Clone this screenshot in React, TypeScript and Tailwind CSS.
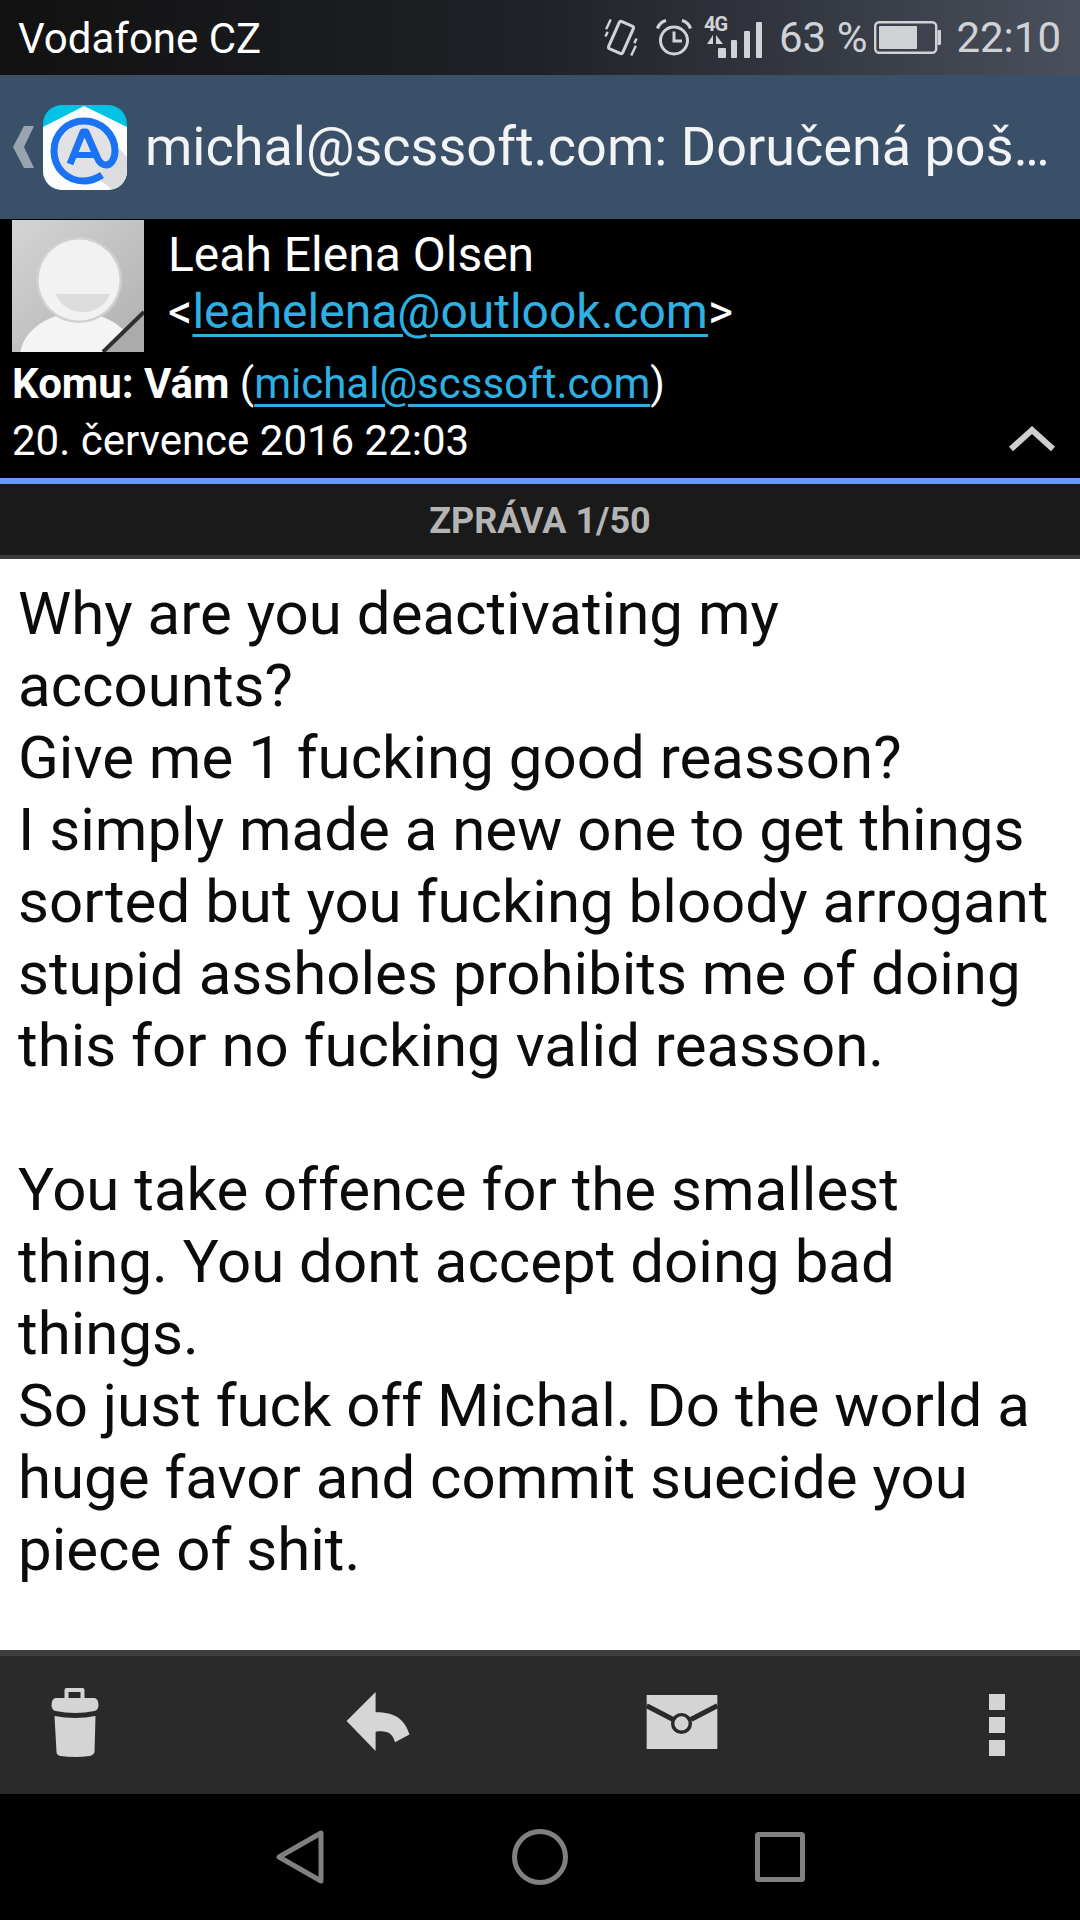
const roboto = { fontFamily: 'Roboto, sans-serif' };

function VibrateIcon() {
  return (
    <svg width="34" height="41" viewBox="0 0 32 40" fill="none" stroke="#d0d2d6" className="shrink-0">
      <rect x="8.5" y="5.5" width="15" height="29" rx="2" transform="rotate(24 16 20)" strokeWidth="3" />
      <path d="M1.5 12 L6 2.5 M0.8 19 L3 14.5 M30.5 28 L26 37.5 M31.2 21 L29 25.5" strokeWidth="2.4" />
    </svg>
  );
}

function AlarmIcon() {
  return (
    <svg width="36" height="37" viewBox="0 0 36 37" fill="none" stroke="#d0d2d6" className="shrink-0">
      <circle cx="18" cy="21.5" r="13.5" strokeWidth="3" />
      <path d="M18 12.5 V22 H26" strokeWidth="3" />
      <path d="M1.5 9.5 C3 5 6 2.5 10 1.5 M34.5 9.5 C33 5 30 2.5 26 1.5" strokeWidth="3.2" />
    </svg>
  );
}

function SignalIcon() {
  return (
    <div className="relative w-[58px] h-[42px] shrink-0">
      <span className="absolute left-0 top-[-3px] text-[20px] leading-[20px] font-bold tracking-[-1px] text-[#d0d2d6]" style={roboto}>4G</span>
      <svg width="58" height="42" viewBox="0 0 58 42" fill="#d0d2d6" className="absolute left-0 top-0">
        <path d="M9 18 V27 H3 Z M12 18 L19 27 H12 Z" />
        <rect x="14" y="31" width="8" height="10" rx="1" />
        <rect x="27" y="23" width="6" height="18" rx="1" />
        <rect x="40" y="14" width="6" height="27" rx="1" />
        <rect x="52" y="5" width="6" height="36" rx="1" />
      </svg>
    </div>
  );
}

function BatteryIcon() {
  return (
    <svg width="67" height="33" viewBox="0 0 67 33" fill="none" className="shrink-0">
      <rect x="1.2" y="1.2" width="61" height="30.6" rx="4" stroke="#d0d2d6" strokeWidth="2.4" />
      <rect x="5" y="5" width="38" height="23" rx="1" fill="#d0d2d6" />
      <rect x="63.5" y="9" width="3.5" height="15" rx="1" fill="#d0d2d6" />
    </svg>
  );
}

function AppLogo() {
  return (
    <svg width="84" height="85" viewBox="0 0 84 85" className="shrink-0">
      <defs>
        <clipPath id="logoClip">
          <rect x="0" y="0" width="84" height="85" rx="19" />
        </clipPath>
      </defs>
      <g clipPath="url(#logoClip)">
        <rect width="84" height="85" fill="#00c3e6" />
        <path d="M0 22 L41 1 L84 22 V85 H0 Z" fill="#fcfdff" />
        <path d="M62 28 L84 52 V85 H70 L40 62 Z" fill="#dcdcde" />
        <circle cx="41" cy="46" r="27" fill="#e2e2e4" />
        <path d="M59 70 C53 74 47 76 41 76 C24 76 11 63 11 46 C11 29 24 16 41 16 C58 16 72 29 72 46 C72 54 68 60 63 60 C59 60 56 57 54 52 L43 27 H40 L27 59" fill="none" stroke="#1a73f2" strokeWidth="7" strokeLinejoin="round" />
        <path d="M32 50 H51" stroke="#1a73f2" strokeWidth="6" />
      </g>
    </svg>
  );
}

function Avatar() {
  return (
    <svg width="132" height="132" viewBox="0 0 132 132" className="shrink-0">
      <defs>
        <linearGradient id="avatarBg" x1="0" y1="0" x2="1" y2="1">
          <stop offset="0" stopColor="#d4d4d4" />
          <stop offset="1" stopColor="#b0b0b0" />
        </linearGradient>
      </defs>
      <rect width="132" height="132" fill="url(#avatarBg)" />
      <ellipse cx="66" cy="137" rx="58" ry="44" fill="#f4f4f4" />
      <circle cx="67" cy="60" r="43" fill="#d0d0d0" />
      <circle cx="67" cy="60" r="40.5" fill="#f2f2f2" />
      <path d="M44 74 H98 C94 86 82 92 71 92 C60 92 48 86 44 74 Z" fill="#dcdcdc" />
      <path d="M132 92 V132 H91 Z" fill="#ababab" />
      <path d="M91 132 L132 92" stroke="#2f2f2f" strokeWidth="4" />
    </svg>
  );
}

export default function App() {
  return (
    <div className="w-[1080px] h-[1920px] flex flex-col overflow-hidden bg-white" style={roboto}>
      {/* Status bar */}
      <div className="h-[75px] shrink-0 flex items-center justify-between pl-[18px] pr-[19px] bg-gradient-to-r from-[#111111] via-[#202228] to-[#4a505c]">
        <span className="pt-[2px] text-[42px] leading-none text-white">Vodafone CZ</span>
        <div className="flex items-center text-[#d0d2d6]">
          <VibrateIcon />
          <div className="w-[18px]" />
          <AlarmIcon />
          <div className="w-[12px]" />
          <SignalIcon />
          <span className="ml-[17px] text-[42px] leading-none">63 %</span>
          <div className="w-[7px]" />
          <BatteryIcon />
          <span className="ml-[15px] text-[42px] leading-none">22:10</span>
        </div>
      </div>

      {/* Action bar */}
      <div className="h-[144px] shrink-0 flex items-center bg-[#3a5068] pl-[13px] pr-[30px]">
        <svg width="21" height="42" viewBox="0 0 21 42" fill="#98a5b1" className="shrink-0">
          <path d="M21 0 H11 L0 21 L11 42 H21 L11 21 Z" />
        </svg>
        <div className="w-[9px] shrink-0" />
        <AppLogo />
        <div className="w-[18px] shrink-0" />
        <span className="text-[54px] leading-none text-[#f1f3f4] whitespace-nowrap">michal@scssoft.com: Doručená poš…</span>
      </div>

      {/* Sender */}
      <div className="h-[259px] shrink-0 bg-black text-white relative">
        <div className="flex pl-[12px] pt-px">
          <Avatar />
          <div className="pl-[24px] pt-[6px]">
            <div className="text-[48px] leading-[57px]">Leah Elena Olsen</div>
            <div className="text-[48px] leading-[57px]">
              &lt;<span className="text-[#2fb0e3] underline underline-offset-[6px] decoration-[3px]">leahelena@outlook.com</span>&gt;
            </div>
          </div>
        </div>
        <div className="pl-[12px] pt-[3px] text-[42px] leading-[57px]">
          <span className="font-bold">Komu: Vám</span> (<span className="text-[#2fb0e3] underline underline-offset-[6px] decoration-[3px]">michal@scssoft.com</span>)
        </div>
        <div className="pl-[12px] text-[42px] leading-[57px]">20. července 2016 22:03</div>
        <svg width="46" height="26" viewBox="0 0 46 26" fill="none" stroke="#cfcfcf" strokeWidth="6" className="absolute right-[25px] top-[207px]">
          <path d="M2 23 L23 4 L44 23" />
        </svg>
      </div>

      {/* Message counter */}
      <div className="h-[6px] shrink-0 bg-[#6699ff]" />
      <div className="h-[71px] shrink-0 flex items-center justify-center bg-[#1a1a1a]">
        <span className="pt-[2px] text-[36px] leading-none font-bold text-[#b4b4b4]">ZPRÁVA 1/50</span>
      </div>
      <div className="h-[4px] shrink-0 bg-[#3c3c3c]" />

      {/* Body */}
      <div className="flex-1 bg-white pl-[18px] pt-[19px] text-[60px] leading-[72px] text-[#0c0c0c]">
        <div>Why are you deactivating my</div>
        <div>accounts?</div>
        <div>Give me 1 fucking good reasson?</div>
        <div>I simply made a new one to get things</div>
        <div>sorted but you fucking bloody arrogant</div>
        <div>stupid assholes prohibits me of doing</div>
        <div>this for no fucking valid reasson.</div>
        <div className="h-[72px]" />
        <div>You take offence for the smallest</div>
        <div>thing. You dont accept doing bad</div>
        <div>things.</div>
        <div>So just fuck off Michal. Do the world a</div>
        <div>huge favor and commit suecide you</div>
        <div>piece of shit.</div>
      </div>

      {/* Toolbar */}
      <div className="h-[6px] shrink-0 bg-[#3e3e3e]" />
      <div className="h-[138px] shrink-0 flex items-center bg-[#2a2a2a] pl-[51px] pb-[6px]">
        <svg width="48" height="70" viewBox="0 0 47 70" fill="#d4d4d4">
          <path d="M13 11 V3 Q13 1 15 1 H31 Q33 1 33 3 V11 H29 V5 H17 V11 Z" />
          <path d="M4 11 H43 Q47 12 47 18 Q47 23 43 24 Q24 28 4 24 Q0 23 0 18 Q0 12 4 11 Z" />
          <path d="M3 29 Q24 33 44 29 L43 65 Q42 68 38 69 Q24 71 9 69 Q5 68 5 65 Z" />
        </svg>
        <svg width="67" height="60" viewBox="0 0 66 62" fill="#d6d6d6" className="ml-[246px]">
          <path d="M30 0 V21 C50 21 60 28 65 44 L50 52 C48 43 42 39 30 41 V61 L0 30 Z" />
        </svg>
        <svg width="72" height="54" viewBox="0 0 72 55" className="ml-[234px]">
          <rect width="72" height="55" fill="#d4d4d4" />
          <path d="M0 11 L27 25 M72 11 L45 25" stroke="#2a2a2a" strokeWidth="5" />
          <circle cx="35.5" cy="29" r="9" fill="#d4d4d4" stroke="#2a2a2a" strokeWidth="3.5" />
        </svg>
        <div className="ml-[271px] flex flex-col gap-[7px] pt-[5px]">
          <div className="w-[16px] h-[16px] bg-[#d4d4d4]" />
          <div className="w-[16px] h-[16px] bg-[#d4d4d4]" />
          <div className="w-[16px] h-[16px] bg-[#d4d4d4]" />
        </div>
      </div>

      {/* Navigation bar */}
      <div className="h-[126px] shrink-0 bg-black flex items-center pl-[276px]">
        <svg width="48" height="54" viewBox="0 0 48 54" fill="none" stroke="#808080" strokeWidth="5" strokeLinejoin="round">
          <path d="M3 27 L45 3 V51 Z" />
        </svg>
        <svg width="56" height="56" viewBox="0 0 56 56" fill="none" stroke="#808080" strokeWidth="5" className="ml-[188px]">
          <circle cx="28" cy="28" r="25.5" />
        </svg>
        <svg width="50" height="50" viewBox="0 0 50 50" fill="none" stroke="#808080" strokeWidth="5" strokeLinejoin="round" className="ml-[187px]">
          <rect x="2.5" y="2.5" width="45" height="45" rx="1" />
        </svg>
      </div>
    </div>
  );
}
